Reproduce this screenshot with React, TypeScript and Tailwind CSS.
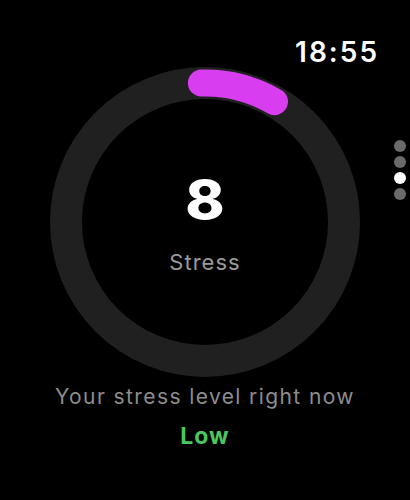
import React from 'react';

const font = { fontFamily: 'Inter, "Noto Sans", sans-serif' };

function StressRing({ value }: { value: number }) {
  return (
    <div className="relative w-[310px] h-[310px]">
      <svg className="absolute inset-0" width="310" height="310" viewBox="0 0 310 310">
        <circle cx="155" cy="155" r="139" fill="none" stroke="#202020" strokeWidth="32" />
        <path
          d="M151.4 16.05 A139 139 0 0 1 224.5 34.6"
          fill="none"
          stroke="#d83ef0"
          strokeWidth="27"
          strokeLinecap="round"
        />
      </svg>
      <div className="relative flex flex-col items-center pt-[106px]">
        <span className="block text-white font-extrabold text-[54px] leading-[54px] scale-x-110">{value}</span>
        <span className="mt-[22px] text-[#9a9a9a] text-[22px] leading-[26px] tracking-[1px]">Stress</span>
      </div>
    </div>
  );
}

export default function App() {
  return (
    <div className="relative w-[410px] h-[500px] bg-black overflow-hidden" style={font}>
      <div className="flex justify-end pt-[37px] pr-[31px]">
        <span className="text-white font-semibold text-[28px] leading-[30px] tracking-[2px]">18:55</span>
      </div>

      <div className="flex justify-center">
        <StressRing value={8} />
      </div>

      <div className="flex flex-col items-center">
        <p className="mt-[6px] text-[#8d8d8d] text-[21px] leading-[28px] tracking-[1.4px]">Your stress level right now</p>
        <p className="mt-[10px] text-[#4ac85f] font-bold text-[23px] leading-[30px] tracking-[1px]">Low</p>
      </div>

      {/* page indicator */}
      <div className="absolute right-[4px] top-[140px] flex flex-col gap-[4px]">
        <span className="w-[12px] h-[12px] rounded-full bg-[#6a6a6a]" />
        <span className="w-[12px] h-[12px] rounded-full bg-[#6a6a6a]" />
        <span className="w-[12px] h-[12px] rounded-full bg-white" />
        <span className="w-[12px] h-[12px] rounded-full bg-[#6a6a6a]" />
      </div>
    </div>
  );
}
